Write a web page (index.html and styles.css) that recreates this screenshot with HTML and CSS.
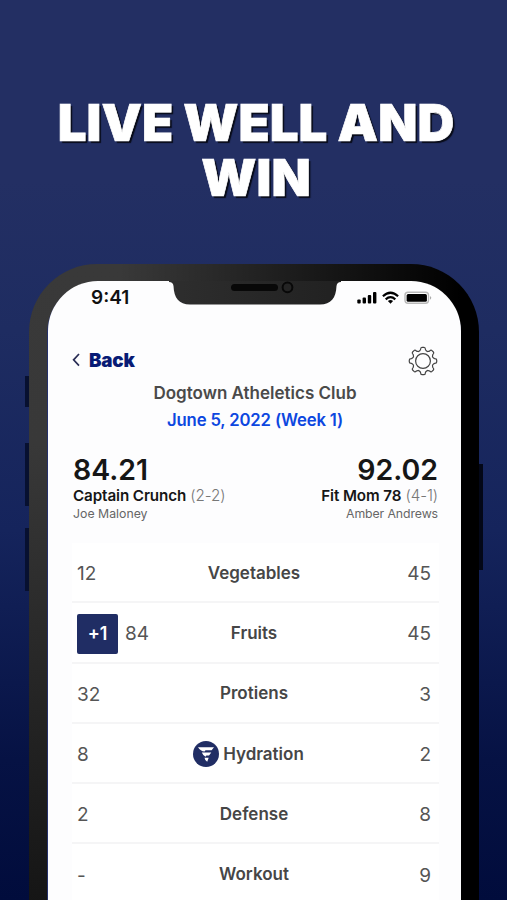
FILE: index.html
```html
<!DOCTYPE html>
<html lang="en">
<head>
<meta charset="utf-8">
<title>Live Well and Win</title>
<link rel="stylesheet" href="styles.css">
</head>
<body>
<h1 class="headline">LIVE WELL AND<br>WIN</h1>
<main class="phone">
  <i class="key key-mute"></i><i class="key key-up"></i><i class="key key-down"></i><i class="key key-power"></i>
  <div class="screen">
    <div class="status">
      <span class="clock">9:41</span>
      <svg class="signals" viewBox="0 0 75 14" aria-hidden="true">
        <rect x="0.300" y="8.500" width="3.400" height="4" rx="1"/><rect x="5.600" y="6.600" width="3.400" height="5.900" rx="1"/><rect x="10.800" y="4" width="3.400" height="8.500" rx="1"/><rect x="16" y="1" width="3.400" height="11.500" rx="1"/>
        <g fill="none" stroke="#000" stroke-width="2.200"><path d="M25.900 5.200Q33.500 -1.700 41.100 5.200"/><path d="M28.700 8.300Q33.500 4.100 38.300 8.300"/></g>
        <path d="M30.900 10Q33.500 7.900 36.100 10L33.500 12.700Z"/>
        <rect x="48" y="1.300" width="23.500" height="11" rx="3" fill="#fff" stroke="#b9b9b9" stroke-width="1.400"/>
        <rect x="49.600" y="2.900" width="20.300" height="7.900" rx="1.500"/>
        <path d="M73 5Q75.500 6.800 73 8.700Z" fill="#aaa"/>
      </svg>
    </div>
    <nav class="topbar">
      <span class="back"><svg class="chevron" viewBox="0 0 10 16" aria-hidden="true"><path d="M8 2L2.600 7.800L8 13.600"/></svg><b>Back</b></span>
      <svg class="gear" viewBox="-15 -15 30 30" aria-hidden="true">
        <defs><path id="tooth" d="M-3.900 -9.400C-3.400 -10.600 -2.500 -10.500 -2.400 -11.700Q-2.400 -13.700 -1 -13.700H1Q2.400 -13.700 2.400 -11.700C2.500 -10.500 3.400 -10.600 3.900 -9.400"/></defs>
        <use href="#tooth"/><use href="#tooth" transform="rotate(45)"/><use href="#tooth" transform="rotate(90)"/><use href="#tooth" transform="rotate(135)"/><use href="#tooth" transform="rotate(180)"/><use href="#tooth" transform="rotate(225)"/><use href="#tooth" transform="rotate(270)"/><use href="#tooth" transform="rotate(315)"/>
        <circle r="7.400"/>
      </svg>
    </nav>
    <h2 class="club">Dogtown Atheletics Club</h2>
    <p class="week">June 5, 2022 (Week 1)</p>
    <section class="match">
      <div class="side"><strong class="score">84.21</strong><span class="team"><b>Captain Crunch</b> (2-2)</span><span class="player">Joe Maloney</span></div>
      <div class="side away"><strong class="score">92.02</strong><span class="team"><b>Fit Mom 78</b> (4-1)</span><span class="player">Amber Andrews</span></div>
    </section>
    <section class="stats">
      <div class="row"><span class="num">12</span><b class="label">Vegetables</b><span class="num">45</span></div>
      <div class="row"><span class="num"><em class="bonus">+1</em>84</span><b class="label">Fruits</b><span class="num">45</span></div>
      <div class="row"><span class="num">32</span><b class="label">Protiens</b><span class="num">3</span></div>
      <div class="row"><span class="num">8</span><b class="label brand"><svg class="logo" viewBox="0 0 26 26" aria-hidden="true"><circle cx="13" cy="13" r="13" fill="#202d64"/><path d="M5 6.200H21L18.600 9.200H12.500L11.600 10.600Q7.500 10 5 6.200ZM8.800 11.600H18.300L16 14.500H13.300L12.600 15.700Q9.900 14.600 8.800 11.600ZM11.500 16.700H15.700L14.200 20.800Q12 19.600 11.500 16.700Z" fill="#fff"/></svg>Hydration</b><span class="num">2</span></div>
      <div class="row"><span class="num">2</span><b class="label">Defense</b><span class="num">8</span></div>
      <div class="row"><span class="num">-</span><b class="label">Workout</b><span class="num">9</span></div>
    </section>
  </div>
  <svg class="notch" viewBox="0 0 172 24" aria-hidden="true">
    <defs><linearGradient id="ng"><stop offset="0" stop-color="#2e2e2e"/><stop offset="1" stop-color="#212121"/></linearGradient></defs>
    <path d="M0 0H172V1Q168 1 167.500 5C167 17 162 23.500 151 23.500H21C10 23.500 5 17 4.500 5Q4 1 0 1Z" fill="url(#ng)"/>
    <rect x="62" y="3" width="47" height="7" rx="3.500" fill="#080808"/>
    <circle cx="118.500" cy="6.300" r="4.900" fill="#242424" stroke="#080808" stroke-width="2"/>
  </svg>
</main>
</body>
</html>
```
FILE: styles.css
```css
* { box-sizing: border-box; }
body {
  margin: 0;
  width: 507px;
  height: 900px;
  overflow: hidden;
  font-family: Inter, "Liberation Sans", sans-serif;
  color: #4a4a4a;
  background: linear-gradient(#232f63 0, #232f63 180px, #1e2c61 330px, #15245c 530px, #061244 760px, #010c3c 900px);
}
h1, h2, p { margin: 0; }
.headline {
  height: 264px;
  padding: 96px 0 0 5px;
  text-align: center;
  font-size: 51px;
  line-height: 54.5px;
  font-weight: 900;
  color: #fff;
  -webkit-text-stroke: 0.7px #fff;
  text-shadow: 2px 2px 1px #080b18;
  white-space: nowrap;
}
.phone {
  position: relative;
  width: 450px;
  height: 680px;
  margin-left: 29px;
  padding: 17px 18px 0 19px;
  border-radius: 68px 68px 0 0;
  background: linear-gradient(90deg, transparent 20%, #000 96%), linear-gradient(#393939, #383838 180px, #151515 640px);
}
.screen {
  height: 663px;
  padding: 0 23px 0 24px;
  border-radius: 50px 50px 0 0;
  background: #fdfdfe;
  box-shadow: -0.5px 2px 0 0.5px #26316b;
}
.key { position: absolute; width: 4px; background: #071030; }
.key-mute { left: -4px; top: 112px; height: 31px; }
.key-up { left: -4px; top: 179px; height: 63px; }
.key-down { left: -4px; top: 264px; height: 63px; }
.key-power { right: -4px; top: 200px; height: 106px; background: #030717; }
.notch { position: absolute; left: 139.500px; top: 16.500px; width: 172px; height: 24px; }
.status { display: flex; justify-content: space-between; height: 57px; padding: 6px 6px 0 19px; }
.clock { font-size: 19px; line-height: 22px; font-weight: 600; color: #111; }
.signals { width: 75px; height: 14px; margin-top: 4px; }
.topbar { display: flex; justify-content: space-between; height: 45px; }
.back { display: flex; height: 44px; align-items: center; gap: 8px; font-size: 18.800px; color: #081b75; }
.back b { font-weight: 900; letter-spacing: -0.2px; }
.chevron { width: 10px; height: 16px; margin-left: -1px; fill: none; stroke: #292d55; stroke-width: 1.700; }
.gear { width: 30px; height: 30px; margin: 8px 0 0; fill: none; stroke: #444; stroke-width: 1.200; }
.club, .week { text-align: center; white-space: nowrap; }
.club { font-size: 17px; line-height: 21px; font-weight: 600; }
.week { margin-top: 6px; font-size: 16.700px; line-height: 20px; font-weight: 600; letter-spacing: -0.15px; color: #0d47e0; }
.match { display: flex; justify-content: space-between; height: 113px; padding: 23px 0 0 1px; }
.side { display: flex; flex-direction: column; white-space: nowrap; }
.away { align-items: flex-end; }
.score { font-size: 28.500px; line-height: 33px; font-weight: 600; color: #161616; }
.team { font-size: 15.200px; line-height: 19px; font-weight: 300; letter-spacing: -0.1px; color: #777; }
.team b { font-weight: 600; color: #161616; }
.player { font-size: 12.300px; line-height: 17px; color: #666; }
.away .player { letter-spacing: -0.1px; }
.stats { margin: 0 -1px 0 0; background: #fff; }
.row { display: grid; grid-template-columns: 90px 1fr 90px; align-items: center; height: 60.300px; padding: 0 8px 0 5px; border-bottom: 2px solid #f5f5f6; }
.num { display: flex; align-items: center; gap: 7px; padding-top: 3px; font-size: 19px; font-weight: 400; color: #555; }
.num:last-child { justify-content: flex-end; }
.label { justify-self: center; padding-top: 1px; font-size: 17px; font-weight: 600; color: #464646; }
.bonus { width: 41px; height: 40px; border-radius: 2px; background: #202d64; color: #fff; font-size: 18px; line-height: 40px; font-style: normal; font-weight: 600; text-align: center; }
.brand { display: flex; align-items: center; gap: 4px; margin-left: -11px; }
.logo { width: 26px; height: 26px; }
```
